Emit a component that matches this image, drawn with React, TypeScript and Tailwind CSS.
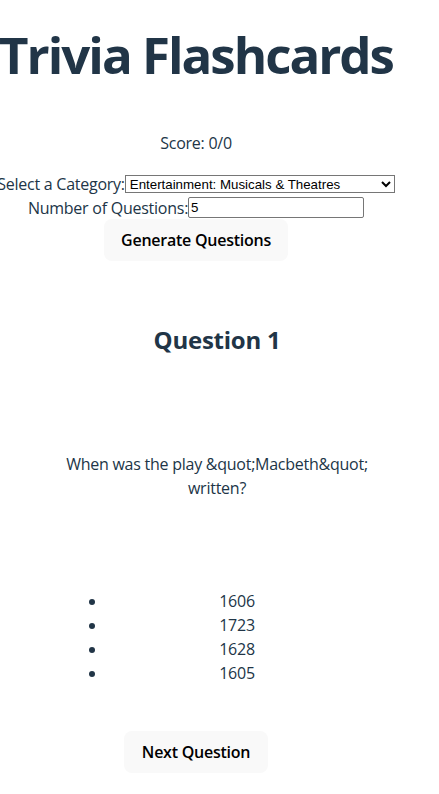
import { useState } from 'react'

const categories = [
  'General Knowledge',
  'Entertainment: Books',
  'Entertainment: Film',
  'Entertainment: Music',
  'Entertainment: Musicals & Theatres',
  'Entertainment: Television',
  'Science & Nature',
]

const answers = ['1606', '1723', '1628', '1605']

export default function App() {
  const [category, setCategory] = useState('Entertainment: Musicals & Theatres')
  const [amount, setAmount] = useState('5')

  return (
    <div className="min-h-[794px] w-[439px] overflow-hidden bg-white font-['Open_Sans',sans-serif] tracking-[-0.25px] text-[#213547]">
      <div className="flex w-[392px] flex-col items-center text-center">
        <h1 className="mt-[26px] whitespace-nowrap text-[51px] font-bold leading-[56px] tracking-[-2px]">
          Trivia Flashcards
        </h1>

        <p className="mt-[49px] text-[16px] leading-[24px]">Score: 0/0</p>

        <div className="mt-[17px] flex h-[24px] w-full items-center justify-center whitespace-nowrap text-[16px]">
          <label htmlFor="category">Select a Category:</label>
          <select
            id="category"
            value={category}
            onChange={(e) => setCategory(e.target.value)}
            className="h-[18px] w-[270px] shrink-0 border border-[#767676] bg-white font-['Liberation_Sans',sans-serif] text-[13.3px] leading-none tracking-normal text-black"
          >
            {categories.map((c) => (
              <option key={c}>{c}</option>
            ))}
          </select>
        </div>

        <div className="flex h-[23px] w-full items-center justify-center whitespace-nowrap text-[16px]">
          <label htmlFor="amount">Number of Questions:</label>
          <input
            id="amount"
            value={amount}
            onChange={(e) => setAmount(e.target.value)}
            className="h-[21px] w-[176px] rounded-[2px] border border-[#767676] px-[2px] font-['Liberation_Sans',sans-serif] text-[13.3px] tracking-normal text-black"
          />
        </div>

        <button className="h-[42px] rounded-lg bg-[#f9f9f9] px-[17px] text-[16px] font-semibold text-black">
          Generate Questions
        </button>
      </div>

      <div className="ml-[61px] mt-[63px] w-[312px] text-center">
        <h2 className="text-[24px] font-bold leading-[32px]">Question 1</h2>
        <p className="mt-[96px] text-[16px] leading-[24px]">
          When was the play &amp;quot;Macbeth&amp;quot; written?
        </p>
        <ul className="ml-[6px] mt-[89px] w-[300px] list-disc pl-[40px] text-[16px] leading-[24px]">
          {answers.map((a) => (
            <li key={a}>{a}</li>
          ))}
        </ul>
      </div>

      <div className="mt-[46px] flex w-[392px] justify-center">
        <button className="h-[42px] rounded-lg bg-[#f9f9f9] px-[18px] text-[16px] font-semibold text-black">
          Next Question
        </button>
      </div>
    </div>
  )
}
